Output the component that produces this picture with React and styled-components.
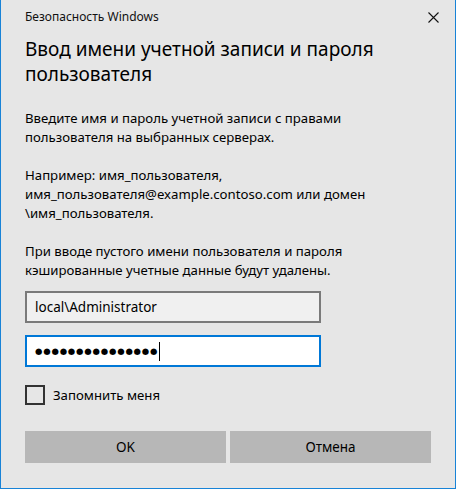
import React from 'react';
import styled, { createGlobalStyle } from 'styled-components';

const Global = createGlobalStyle`
  html, body {
    margin: 0;
    padding: 0;
    background: #e6e6e6;
  }
  * { box-sizing: border-box; }
`;

const Window = styled.div`
  width: 456px;
  height: 489px;
  background: #e6e6e6;
  border: 1px solid #1883d7;
  border-top: none;
  font-family: "Noto Sans", "Liberation Sans", sans-serif;
  color: #000;
  display: flex;
  flex-direction: column;
`;

const TitleBar = styled.div`
  height: 32px;
  display: flex;
  align-items: center;
  justify-content: space-between;
  padding-left: 24px;
  padding-right: 12px;
  font-size: 12px;
  color: #111;
`;

const Close = styled.div`
  width: 20px;
  height: 20px;
  display: flex;
  align-items: center;
  justify-content: center;
  margin-top: 2px;
`;

const Content = styled.div`
  padding: 0 24px 0 24px;
  display: flex;
  flex-direction: column;
`;

const Heading = styled.h1`
  margin: 5px 0 22px;
  font-size: 19px;
  line-height: 25px;
  font-weight: 400;
  color: #000;
`;

const Para = styled.p`
  margin: 0 0 19px;
  font-size: 13.2px;
  line-height: 19px;
  color: #000;
  &:last-of-type { margin-bottom: 11px; }
`;

const Field = styled.div`
  width: 296px;
  height: 32px;
  border: 2px solid ${p => (p.focused ? '#0078d7' : '#7a7a7a')};
  background: ${p => (p.focused ? '#fff' : '#f0f0f0')};
  margin-bottom: 12px;
  display: flex;
  align-items: center;
  padding-left: 8px;
  font-size: 13.5px;
  color: #000;
`;

const Dots = styled.span`
  font-size: 8.5px;
  letter-spacing: 0.8px;
  font-family: "DejaVu Sans", sans-serif;
`;

const Caret = styled.span`
  display: inline-block;
  width: 1px;
  height: 19px;
  background: #000;
  margin-left: 1px;
`;

const CheckRow = styled.label`
  display: flex;
  align-items: center;
  gap: 8px;
  margin-top: 6px;
  font-size: 13.2px;
`;

const Box = styled.span`
  width: 20px;
  height: 20px;
  border: 2px solid #333;
`;

const Buttons = styled.div`
  display: grid;
  grid-template-columns: 201px 201px;
  gap: 4px;
  margin-top: 26px;
`;

const Button = styled.div`
  height: 32px;
  background: #b7b7b7;
  display: flex;
  align-items: center;
  justify-content: center;
  font-size: 13.5px;
  color: #000;
`;

export default function App() {
  return (
    <>
      <Global />
      <Window>
        <TitleBar>
          <span>Безопасность Windows</span>
          <Close>
            <svg width="11" height="11" viewBox="0 0 11 11">
              <path d="M0.5 0.5 L10.5 10.5 M10.5 0.5 L0.5 10.5" stroke="#111" strokeWidth="1.1" />
            </svg>
          </Close>
        </TitleBar>
        <Content>
          <Heading>Ввод имени учетной записи и пароля пользователя</Heading>
          <Para>Введите имя и пароль учетной записи с правами пользователя на выбранных серверах.</Para>
          <Para>
            Например: имя_пользователя,<br />
            имя_пользователя@example.contoso.com или домен<br />
            \имя_пользователя.
          </Para>
          <Para>При вводе пустого имени пользователя и пароля кэшированные учетные данные будут удалены.</Para>
          <Field>local\Administrator</Field>
          <Field focused>
            <Dots>●●●●●●●●●●●●●●●</Dots>
            <Caret />
          </Field>
          <CheckRow>
            <Box />
            Запомнить меня
          </CheckRow>
          <Buttons>
            <Button>OK</Button>
            <Button>Отмена</Button>
          </Buttons>
        </Content>
      </Window>
    </>
  );
}
